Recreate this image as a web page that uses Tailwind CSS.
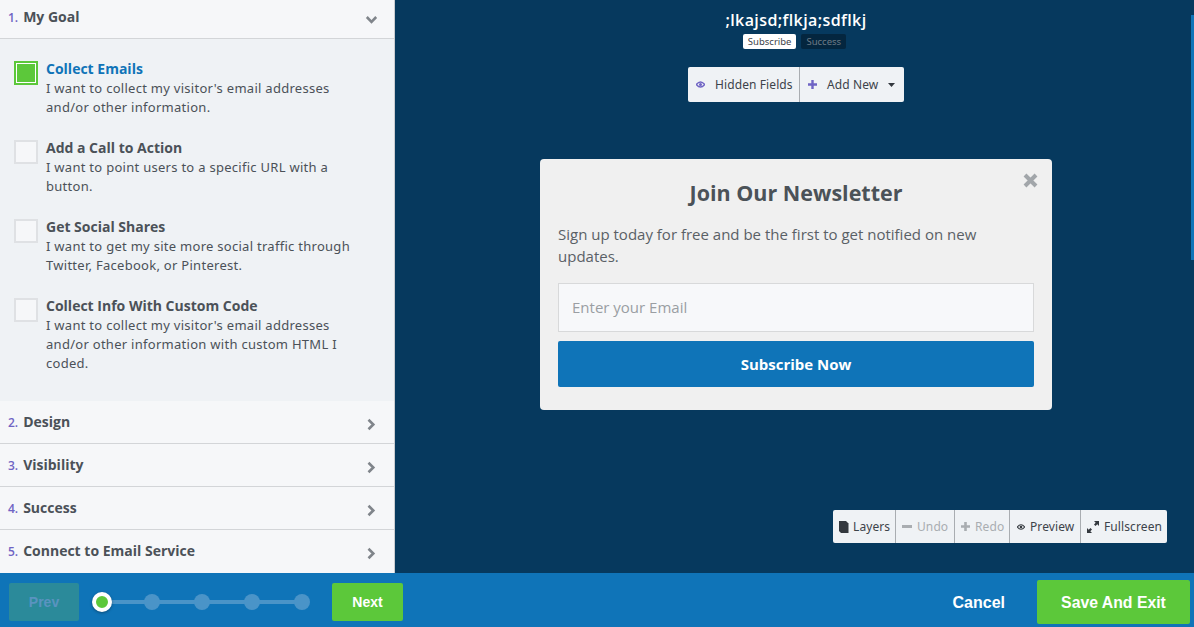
<!DOCTYPE html>
<html>
<head>
<meta charset="utf-8">
<script src="https://cdn.jsdelivr.net/npm/@tailwindcss/browser@4"></script>
</head>
<body class="m-0 overflow-hidden">
<div class="w-[1194px] h-[627px] flex flex-col overflow-hidden font-['Open_Sans',sans-serif] bg-[#06395e]">
  <div class="flex h-[573px]">
    <aside class="w-[395px] shrink-0 flex flex-col bg-[#f6f7f9] border-r border-[#c9ccd0] text-[#4b5158]">
      <div class="h-[39px] shrink-0 flex items-center justify-between pl-[8px] pr-[16px] border-b border-[#d3d5d8] pb-[5px]">
        <div class="flex items-baseline gap-[5px] font-bold"><span class="text-[#6f64c4] text-[12px] font-semibold">1.</span><span class="text-[14px]">My Goal</span></div>
        <svg class="w-[13px] h-[10px] mt-[6px]" viewBox="0 0 13 10"><path d="M1.8 2 L6.5 6.8 L11.2 2" fill="none" stroke="#80858b" stroke-width="2.6"/></svg>
      </div>
      <div class="h-[362px] shrink-0 bg-[#eff2f5] flex flex-col pl-[14px] pt-[21px] gap-[21px] font-['Noto_Sans',sans-serif]">
        <div class="flex h-[58px]">
          <div class="w-[24px] h-[24px] mt-[1px] shrink-0 border-2 border-[#5cc83a] bg-[#5cc83a] outline outline-1 -outline-offset-3 outline-white"></div>
          <div class="ml-[8px] -mt-[1px]">
            <div class="font-['Open_Sans',sans-serif] font-bold text-[14px] leading-[19px] text-[#0f74b8]">Collect Emails</div>
            <div class="mt-[1px] text-[13px] leading-[19px] tracking-[0.28px]">I want to collect my visitor's email addresses<br>and/or other information.</div>
          </div>
        </div>
        <div class="flex h-[58px]">
          <div class="w-[24px] h-[24px] mt-[1px] shrink-0 border-2 border-[#dfe1e4] bg-[#f6f7f9]"></div>
          <div class="ml-[8px] -mt-[1px]">
            <div class="font-['Open_Sans',sans-serif] font-bold text-[14px] leading-[19px]">Add a Call to Action</div>
            <div class="mt-[1px] text-[13px] leading-[19px] tracking-[0.28px]">I want to point users to a specific URL with a<br>button.</div>
          </div>
        </div>
        <div class="flex h-[58px]">
          <div class="w-[24px] h-[24px] mt-[1px] shrink-0 border-2 border-[#dfe1e4] bg-[#f6f7f9]"></div>
          <div class="ml-[8px] -mt-[1px]">
            <div class="font-['Open_Sans',sans-serif] font-bold text-[14px] leading-[19px]">Get Social Shares</div>
            <div class="mt-[1px] text-[13px] leading-[19px] tracking-[0.28px]">I want to get my site more social traffic through<br>Twitter, Facebook, or Pinterest.</div>
          </div>
        </div>
        <div class="flex h-[77px]">
          <div class="w-[24px] h-[24px] mt-[1px] shrink-0 border-2 border-[#dfe1e4] bg-[#f6f7f9]"></div>
          <div class="ml-[8px] -mt-[1px]">
            <div class="font-['Open_Sans',sans-serif] font-bold text-[14px] leading-[19px]">Collect Info With Custom Code</div>
            <div class="mt-[1px] text-[13px] leading-[19px] tracking-[0.28px]">I want to collect my visitor's email addresses<br>and/or other information with custom HTML I<br>coded.</div>
          </div>
        </div>
      </div>
      <div class="h-[43px] shrink-0 flex items-center justify-between pl-[8px] pr-[18px] border-b border-[#d3d5d8]">
        <div class="-mt-[2px] flex items-baseline gap-[5px] font-bold"><span class="text-[#6f64c4] text-[12px] font-semibold">2.</span><span class="text-[14px]">Design</span></div>
        <svg class="w-[10px] h-[13px] mt-[4px]" viewBox="0 0 10 13"><path d="M2.5 1.8 L7.3 6.5 L2.5 11.2" fill="none" stroke="#80858b" stroke-width="2.6"/></svg>
      </div>
      <div class="h-[43px] shrink-0 flex items-center justify-between pl-[8px] pr-[18px] border-b border-[#d3d5d8]">
        <div class="-mt-[2px] flex items-baseline gap-[5px] font-bold"><span class="text-[#6f64c4] text-[12px] font-semibold">3.</span><span class="text-[14px]">Visibility</span></div>
        <svg class="w-[10px] h-[13px] mt-[4px]" viewBox="0 0 10 13"><path d="M2.5 1.8 L7.3 6.5 L2.5 11.2" fill="none" stroke="#80858b" stroke-width="2.6"/></svg>
      </div>
      <div class="h-[43px] shrink-0 flex items-center justify-between pl-[8px] pr-[18px] border-b border-[#d3d5d8]">
        <div class="-mt-[2px] flex items-baseline gap-[5px] font-bold"><span class="text-[#6f64c4] text-[12px] font-semibold">4.</span><span class="text-[14px]">Success</span></div>
        <svg class="w-[10px] h-[13px] mt-[4px]" viewBox="0 0 10 13"><path d="M2.5 1.8 L7.3 6.5 L2.5 11.2" fill="none" stroke="#80858b" stroke-width="2.6"/></svg>
      </div>
      <div class="h-[43px] shrink-0 flex items-center justify-between pl-[8px] pr-[18px]">
        <div class="-mt-[2px] flex items-baseline gap-[5px] font-bold"><span class="text-[#6f64c4] text-[12px] font-semibold">5.</span><span class="text-[14px]">Connect to Email Service</span></div>
        <svg class="w-[10px] h-[13px] mt-[4px]" viewBox="0 0 10 13"><path d="M2.5 1.8 L7.3 6.5 L2.5 11.2" fill="none" stroke="#80858b" stroke-width="2.6"/></svg>
      </div>
    </aside>
    <main class="relative flex-1 flex flex-col items-center bg-[#06395e] pl-[3px]">
      <div class="absolute right-0 top-[15px] w-[3px] h-[245px] bg-[#0f74b8]"></div>
      <div class="mt-[9px] h-[22px] text-white font-semibold text-[16px] leading-[22px] tracking-[0.4px]">;lkajsd;flkja;sdflkj</div>
      <div class="flex gap-[5px] mt-[3px] -ml-[3px] font-['Noto_Sans',sans-serif] text-[9.5px] leading-[15px]">
        <div class="h-[15px] px-[5px] bg-white rounded-[2px] text-[#3d434a]">Subscribe</div>
        <div class="h-[15px] px-[5px] bg-[#04263f] rounded-[2px] text-[#6e7b86]">Success</div>
      </div>
      <div class="mt-[18px] h-[35px] flex rounded-[2px] bg-[#eff2f5] font-['Noto_Sans',sans-serif] text-[12px] text-[#3d434a] tracking-[0.1px]">
        <div class="w-[112px] flex items-center pl-[8px] pt-[1px] border-r border-[#a9adb1]">
          <svg class="w-[9px] h-[9px] -mt-[1px]" viewBox="0 0 9 9"><path d="M0.3 4.5 Q4.5 -0.5 8.7 4.5 Q4.5 9.5 0.3 4.5Z" fill="none" stroke="#6f64c4" stroke-width="1.3"/><circle cx="4.5" cy="4.5" r="1.5" fill="#6f64c4"/></svg>
          <span class="ml-[10px]">Hidden Fields</span>
        </div>
        <div class="w-[104px] flex items-center pl-[8px] pt-[1px]">
          <svg class="w-[9px] h-[9px] -mt-[1px]" viewBox="0 0 9 9"><path d="M4.5 0 V9 M0 4.5 H9" stroke="#6f64c4" stroke-width="2.4"/></svg>
          <span class="ml-[10px]">Add New</span>
          <svg class="w-[7px] h-[4px] ml-[10px]" viewBox="0 0 7 4"><path d="M0 0 H7 L3.5 4Z" fill="#33383e"/></svg>
        </div>
      </div>
      <div class="relative mt-[57px] w-[512px] h-[251px] bg-[#f0f0f0] rounded-[4px] px-[18px] pt-[19px]">
        <svg class="absolute right-[14px] top-[14px] w-[15px] h-[15px]" viewBox="0 0 15 15"><path d="M2 2 L13 13 M13 2 L2 13" stroke="#a2a6aa" stroke-width="4"/></svg>
        <div class="text-center text-[21.5px] leading-[30px] font-bold text-[#4b5258]">Join Our Newsletter</div>
        <p class="mt-[15px] text-[15px] leading-[22px] text-[#5a6066]">Sign up today for free and be the first to get notified on new updates.</p>
        <div class="mt-[16px] h-[49px] flex items-center pl-[13px] bg-[#f7f8fa] border border-[#d8d9da] text-[15px] text-[#9a9ea3]">Enter your Email</div>
        <div class="mt-[9px] h-[46px] flex items-center justify-center bg-[#0f74b8] rounded-[2px] text-white text-[15px] font-bold">Subscribe Now</div>
      </div>
      <div class="absolute left-[438px] top-[510px] h-[33px] flex rounded-[2px] bg-[#eff2f5] font-['Noto_Sans',sans-serif] text-[12px] text-[#3d434a] tracking-[0.1px]">
        <div class="w-[63px] flex items-center pl-[6px] pt-[1px] gap-[4px] border-r border-[#a9adb1]">
          <svg class="w-[10px] h-[12px] -mt-[1px]" viewBox="0 0 10 12"><path d="M0 0 H7 L9.5 2.5 V12 H2 L0 10Z" fill="#33383e"/></svg><span>Layers</span>
        </div>
        <div class="w-[59px] flex items-center pl-[6px] pt-[1px] gap-[5px] border-r border-[#a9adb1] text-[#a9adb1]">
          <svg class="w-[10px] h-[3px] -mt-[1px]" viewBox="0 0 10 3"><rect width="10" height="3" fill="#a9adb1"/></svg><span>Undo</span>
        </div>
        <div class="w-[55px] flex items-center pl-[6px] pt-[1px] gap-[5px] border-r border-[#a9adb1] text-[#a9adb1]">
          <svg class="w-[9px] h-[9px] -mt-[1px]" viewBox="0 0 9 9"><path d="M4.5 0 V9 M0 4.5 H9" stroke="#a9adb1" stroke-width="2.6"/></svg><span>Redo</span>
        </div>
        <div class="w-[71px] flex items-center pl-[7px] pt-[1px] gap-[5px] border-r border-[#a9adb1]">
          <svg class="w-[8px] h-[8px] -mt-[1px]" viewBox="0 0 9 9"><path d="M0.3 4.5 Q4.5 -0.5 8.7 4.5 Q4.5 9.5 0.3 4.5Z" fill="none" stroke="#33383e" stroke-width="1.3"/><circle cx="4.5" cy="4.5" r="1.5" fill="#33383e"/></svg><span>Preview</span>
        </div>
        <div class="w-[86px] flex items-center pl-[6px] pt-[1px] gap-[5px]">
          <svg class="w-[12px] h-[12px] -mt-[1px]" viewBox="0 0 12 12"><path d="M7 0 H12 V5 L10.3 3.3 L8.5 5 L7 3.5 L8.7 1.7Z M0 12 V7 L1.7 8.7 L3.5 7 L5 8.5 L3.3 10.3 L5 12Z" fill="#33383e"/></svg><span>Fullscreen</span>
        </div>
      </div>
    </main>
  </div>
  <footer class="h-[54px] shrink-0 bg-[#0f74b8] flex items-center pl-[9px] pr-[4px] pt-[4px] font-['Liberation_Sans',sans-serif] font-bold">
    <div class="w-[70px] h-[38px] rounded-[2px] bg-[#2b8a9a] flex items-center justify-center text-[14px] text-[#5a93c0]">Prev</div>
    <div class="relative ml-[13px] w-[218px] h-[20px] flex items-center gap-[34px]">
      <div class="absolute left-[8px] right-[8px] top-[8px] h-[4px] bg-[#4a94c8]"></div>
      <div class="relative w-[20px] h-[20px] -mr-[2px] rounded-full bg-[#5cc83a] border-[4px] border-white shadow-[0_1px_3px_rgba(0,0,0,0.35)]"></div>
      <div class="relative w-[16px] h-[16px] rounded-full bg-[#4a94c8]"></div>
      <div class="relative w-[16px] h-[16px] rounded-full bg-[#4a94c8]"></div>
      <div class="relative w-[16px] h-[16px] rounded-full bg-[#4a94c8]"></div>
      <div class="relative w-[16px] h-[16px] rounded-full bg-[#4a94c8]"></div>
    </div>
    <div class="ml-[22px] w-[71px] h-[38px] rounded-[2px] bg-[#5cc83a] flex items-center justify-center text-[14px] text-white">Next</div>
    <div class="ml-auto flex items-center">
      <span class="text-white text-[16px] pt-[2px]">Cancel</span>
      <div class="ml-[32px] w-[153px] h-[44px] pt-[2px] rounded-[2px] bg-[#5cc83a] flex items-center justify-center text-[15.8px] text-white">Save And Exit</div>
    </div>
  </footer>
</div>
</body>
</html>
